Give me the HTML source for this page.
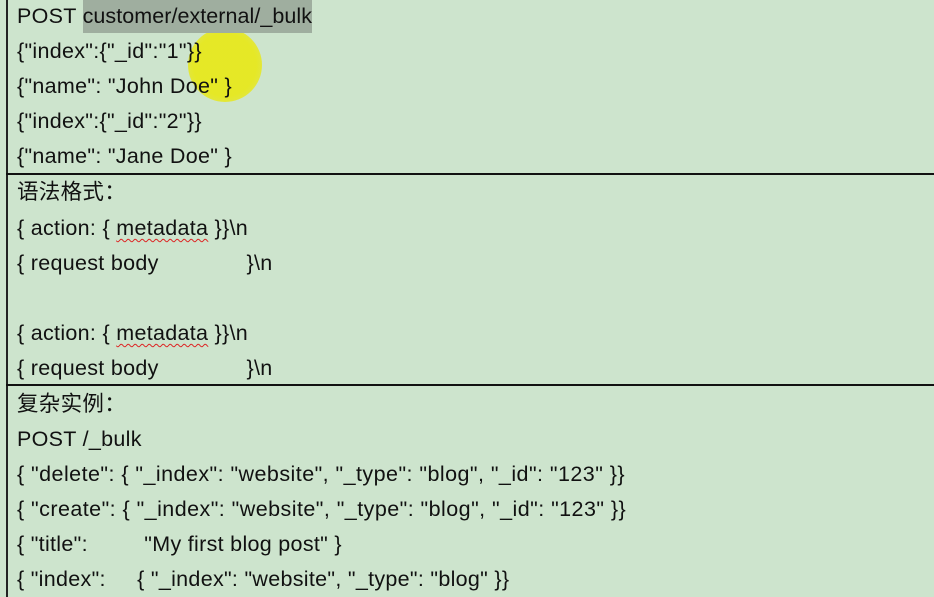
<!DOCTYPE html>
<html><head><meta charset="utf-8"><style>
html,body{margin:0;padding:0;}
body{width:934px;height:597px;background:#cde4cd;position:relative;overflow:hidden;font-family:"Liberation Sans","Noto Sans CJK SC",sans-serif;font-size:21.5px;letter-spacing:0.3px;color:#111;}
.l{position:absolute;left:17px;white-space:pre;line-height:26px;}
.vl{position:absolute;left:6px;top:0;width:2px;height:597px;background:#222;}
.hl{position:absolute;left:6px;right:0;height:2px;background:#111;}
.hi{background:#9fae9f;padding:4px 0 5px;letter-spacing:0.05px;}
.sq{text-decoration:underline wavy #d22;text-underline-offset:3px;text-decoration-thickness:1px;}
.dot{position:absolute;left:188px;top:28px;width:74px;height:74px;border-radius:50%;background:radial-gradient(circle,rgba(232,232,20,0.9) 60%,rgba(232,232,20,0.5) 100%);}
</style></head><body>
<div class="vl"></div>
<div class="hl" style="top:173px"></div>
<div class="hl" style="top:384px"></div>
<div class="dot"></div>
<div class="l" style="top:3px">POST <span class="hi">customer/external/_bulk</span></div>
<div class="l" style="top:38px">{"index":{"_id":"1"}}</div>
<div class="l" style="top:73px">{"name": "John Doe" }</div>
<div class="l" style="top:108px">{"index":{"_id":"2"}}</div>
<div class="l" style="top:143px">{"name": "Jane Doe" }</div>
<div class="l" style="top:179px">语法格式：</div>
<div class="l" style="top:215px">{ action: { <span class="sq">metadata</span> }}\n</div>
<div class="l" style="top:250px">{ request body              }\n</div>
<div class="l" style="top:320px">{ action: { <span class="sq">metadata</span> }}\n</div>
<div class="l" style="top:355px">{ request body              }\n</div>
<div class="l" style="top:391px">复杂实例：</div>
<div class="l" style="top:426px">POST /_bulk</div>
<div class="l" style="top:461px;letter-spacing:0.45px">{ "delete": { "_index": "website", "_type": "blog", "_id": "123" }}</div>
<div class="l" style="top:496px;letter-spacing:0.45px">{ "create": { "_index": "website", "_type": "blog", "_id": "123" }}</div>
<div class="l" style="top:531px">{ "title":         "My first blog post" }</div>
<div class="l" style="top:566px">{ "index":     { "_index": "website", "_type": "blog" }}</div>
</body></html>
